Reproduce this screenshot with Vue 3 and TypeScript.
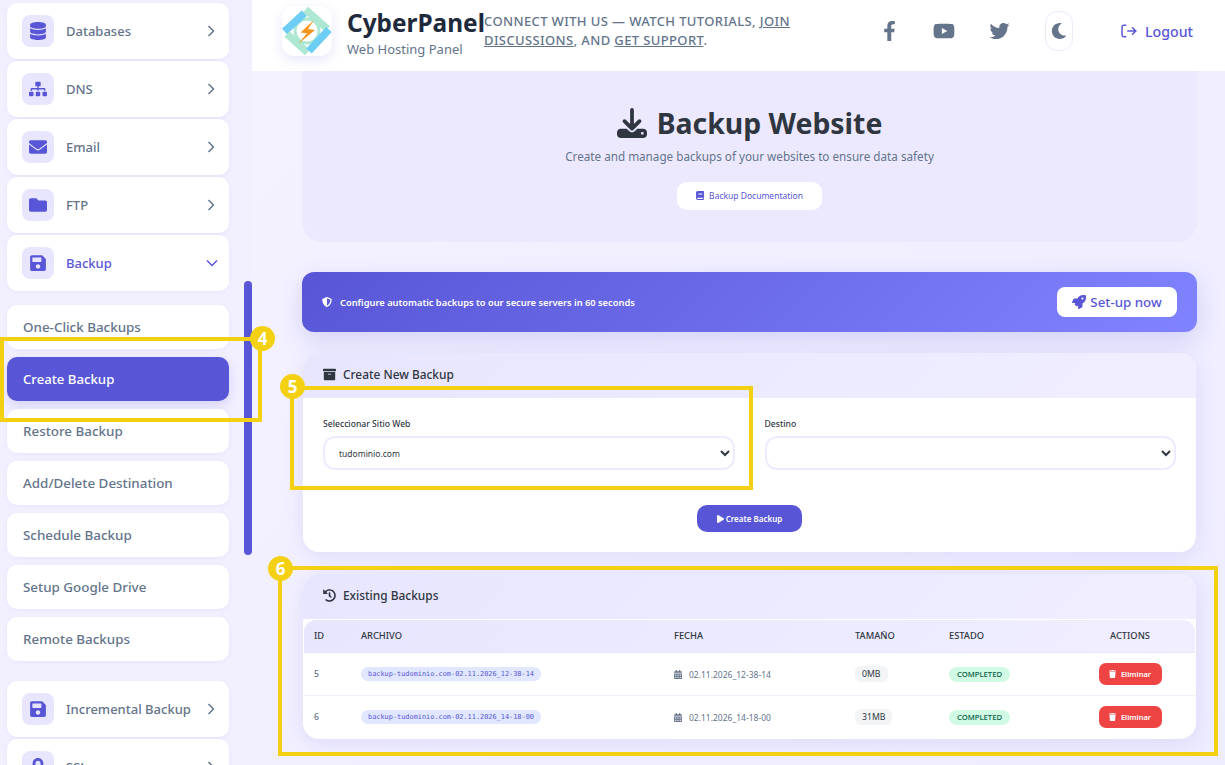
<script setup lang="ts">
interface Icon {
  box: string
  d: string
}

const icons: Record<string, Icon> = {
  database: { box: '0 0 448 512', d: 'M448 73.12v45.75C448 159.2 347.6 192 224 192S0 159.2 0 118.9V73.12C0 32.8 100.4 0 224 0s224 32.8 224 73.12zM448 176v102.9C448 319.2 347.6 352 224 352S0 319.2 0 278.9V176c48.12 33.12 136.2 48.62 224 48.62S399.9 209.1 448 176zM448 336v102.9C448 479.2 347.6 512 224 512S0 479.2 0 438.9V336c48.12 33.13 136.2 48.63 224 48.63S399.9 369.1 448 336z' },
  sitemap: { box: '0 0 640 512', d: 'M128 352H32c-17.67 0-32 14.33-32 32v96c0 17.67 14.33 32 32 32h96c17.67 0 32-14.33 32-32v-96c0-17.67-14.33-32-32-32zm-24-80h192v48h48v-48h192v48h48v-57.59c0-21.17-17.23-38.41-38.41-38.41H344v-64h40c17.67 0 32-14.33 32-32V32c0-17.67-14.33-32-32-32H256c-17.67 0-32 14.33-32 32v96c0 17.67 14.33 32 32 32h40v64H94.41C73.23 224 56 241.23 56 262.41V320h48v-48zm264 80h-96c-17.67 0-32 14.33-32 32v96c0 17.67 14.33 32 32 32h96c17.67 0 32-14.33 32-32v-96c0-17.67-14.33-32-32-32zm240 0h-96c-17.67 0-32 14.33-32 32v96c0 17.67 14.33 32 32 32h96c17.67 0 32-14.33 32-32v-96c0-17.67-14.33-32-32-32z' },
  envelope: { box: '0 0 512 512', d: 'M502.3 190.8c3.9-3.1 9.7-.2 9.7 4.7V400c0 26.5-21.5 48-48 48H48c-26.5 0-48-21.5-48-48V195.6c0-5 5.7-7.8 9.7-4.7 22.4 17.4 52.1 39.5 154.1 113.6 21.1 15.4 56.7 47.8 92.2 47.6 35.7.3 72-32.8 92.3-47.6 102-74.1 131.6-96.3 154-113.7zM256 320c23.2.4 56.6-29.2 73.4-41.4 132.7-96.3 142.8-104.7 173.4-128.7 5.8-4.5 9.2-11.5 9.2-18.9v-19c0-26.5-21.5-48-48-48H48C21.5 64 0 85.5 0 112v19c0 7.4 3.4 14.3 9.2 18.9 30.6 23.9 40.7 32.4 173.4 128.7 16.8 12.2 50.2 41.8 73.4 41.4z' },
  folder: { box: '0 0 512 512', d: 'M464 128H272l-64-64H48C21.49 64 0 85.49 0 112v288c0 26.51 21.49 48 48 48h416c26.51 0 48-21.49 48-48V176c0-26.51-21.49-48-48-48z' },
  save: { box: '0 0 448 512', d: 'M433.941 129.941l-83.882-83.882A48 48 0 0 0 316.118 32H48C21.49 32 0 53.49 0 80v352c0 26.51 21.49 48 48 48h352c26.51 0 48-21.49 48-48V163.882a48 48 0 0 0-14.059-33.941zM224 416c-35.346 0-64-28.654-64-64 0-35.346 28.654-64 64-64s64 28.654 64 64c0 35.346-28.654 64-64 64zm96-304.52V212c0 6.627-5.373 12-12 12H76c-6.627 0-12-5.373-12-12V108c0-6.627 5.373-12 12-12h228.52c3.183 0 6.235 1.264 8.485 3.515l3.48 3.48A11.996 11.996 0 0 1 320 111.48z' },
  lock: { box: '0 0 448 512', d: 'M400 224h-24v-72C376 68.2 307.8 0 224 0S72 68.2 72 152v72H48c-26.5 0-48 21.5-48 48v192c0 26.5 21.5 48 48 48h352c26.5 0 48-21.5 48-48V272c0-26.5-21.5-48-48-48zm-104 0H152v-72c0-39.7 32.3-72 72-72s72 32.3 72 72v72z' },
  facebook: { box: '0 0 320 512', d: 'M279.14 288l14.22-92.66h-88.91v-60.13c0-25.35 12.42-50.06 52.24-50.06h40.42V6.26S260.43 0 225.36 0c-73.22 0-121.08 44.38-121.08 124.72v70.62H22.89V288h81.39v224h100.17V288z' },
  youtube: { box: '0 0 576 512', d: 'M549.655 124.083c-6.281-23.65-24.787-42.276-48.284-48.597C458.781 64 288 64 288 64S117.22 64 74.629 75.486c-23.497 6.322-42.003 24.947-48.284 48.597-11.412 42.867-11.412 132.305-11.412 132.305s0 89.438 11.412 132.305c6.281 23.65 24.787 41.5 48.284 47.821C117.22 448 288 448 288 448s170.78 0 213.371-11.486c23.497-6.321 42.003-24.171 48.284-47.821 11.412-42.867 11.412-132.305 11.412-132.305s0-89.438-11.412-132.305zm-317.51 213.508V175.185l142.739 81.205-142.739 81.201z' },
  twitter: { box: '0 0 512 512', d: 'M459.37 151.716c.325 4.548.325 9.097.325 13.645 0 138.72-105.583 298.558-298.558 298.558-59.452 0-114.68-17.219-161.137-47.106 8.447.974 16.568 1.299 25.34 1.299 49.055 0 94.213-16.568 130.274-44.832-46.132-.975-84.792-31.188-98.112-72.772 6.498.974 12.995 1.624 19.818 1.624 9.421 0 18.843-1.3 27.614-3.573-48.081-9.747-84.143-51.98-84.143-102.985v-1.299c13.969 7.797 30.214 12.67 47.431 13.319-28.264-18.843-46.781-51.005-46.781-87.391 0-19.492 5.197-37.36 14.294-52.954 51.655 63.675 129.3 105.258 216.365 109.807-1.624-7.797-2.599-15.918-2.599-24.04 0-57.828 46.782-104.934 104.934-104.934 30.213 0 57.502 12.67 76.67 33.137 23.715-4.548 46.456-13.32 66.599-25.34-7.798 24.366-24.366 44.833-46.132 57.827 21.117-2.273 41.584-8.122 60.426-16.243-14.292 20.791-32.161 39.308-52.628 54.253z' },
  moon: { box: '0 0 512 512', d: 'M283.211 512c78.962 0 151.079-35.925 198.857-94.792 7.068-8.708-.639-21.43-11.562-19.35-124.203 23.654-238.262-71.576-238.262-196.954 0-72.222 38.662-138.635 101.498-174.394 9.686-5.512 7.25-20.197-3.756-22.23A258.156 258.156 0 0 0 283.211 0c-141.309 0-256 114.511-256 256 0 141.309 114.511 256 256 256z' },
  download: { box: '0 0 512 512', d: 'M288 32c0-17.7-14.3-32-32-32s-32 14.3-32 32V274.7l-73.4-73.4c-12.5-12.5-32.8-12.5-45.3 0s-12.5 32.8 0 45.3l128 128c12.5 12.5 32.8 12.5 45.3 0l128-128c12.5-12.5 12.5-32.8 0-45.3s-32.8-12.5-45.3 0L288 274.7V32zM64 352c-35.3 0-64 28.7-64 64v32c0 35.3 28.7 64 64 64H448c35.3 0 64-28.7 64-64V416c0-35.3-28.7-64-64-64H346.5l-45.3 45.3c-25 25-65.5 25-90.5 0L165.5 352H64zm368 56a24 24 0 1 1 0 48 24 24 0 1 1 0-48z' },
  book: { box: '0 0 448 512', d: 'M448 360V24c0-13.3-10.7-24-24-24H96C43 0 0 43 0 96v320c0 53 43 96 96 96h328c13.3 0 24-10.7 24-24v-16c0-7.5-3.5-14.3-8.9-18.7-4.2-15.4-4.2-59.3 0-74.7 5.4-4.3 8.9-11.1 8.9-18.6zM128 134c0-3.3 2.7-6 6-6h212c3.3 0 6 2.7 6 6v20c0 3.3-2.7 6-6 6H134c-3.3 0-6-2.7-6-6v-20zm0 64c0-3.3 2.7-6 6-6h212c3.3 0 6 2.7 6 6v20c0 3.3-2.7 6-6 6H134c-3.3 0-6-2.7-6-6v-20zm253.4 250H96c-17.7 0-32-14.3-32-32 0-17.6 14.4-32 32-32h285.4c-1.9 17.1-1.9 46.9 0 64z' },
  shield: { box: '0 0 512 512', d: 'M466.5 83.7l-192-80a48.15 48.15 0 0 0-36.9 0l-192 80C27.7 91.1 16 108.6 16 128c0 198.5 114.5 335.7 221.5 380.3 11.8 4.9 25.1 4.9 36.9 0C360.1 472.6 496 349.3 496 128c0-19.4-11.7-36.9-29.5-44.3zM256.1 446.3l-.1-381 175.9 73.3c-3.3 151.4-82.1 261.1-175.8 307.7z' },
  rocket: { box: '0 0 512 512', d: 'M505.12 19.09c-1.19-5.53-6.66-11-12.21-12.19C460.72 0 435.51 0 410.41 0 307.18 0 245.27 55.2 199.05 128H94.84c-16.35.02-35.56 11.88-42.89 26.48L2.52 253.3A28.4 28.4 0 0 0 0 264a24 24 0 0 0 24 24h103.81l-22.47 22.47c-11.37 11.36-13 32.26 0 45.25l50.9 50.91c11.16 11.19 32.16 13.16 45.28 0L224 384.16V488a24 24 0 0 0 24 24 28.56 28.56 0 0 0 10.71-2.52l98.73-49.39c14.63-7.3 26.51-26.5 26.51-42.86V312.8c72.6-46.31 128.03-108.41 128.03-211.1.1-25.2.1-50.4-6.86-82.61zM384.04 168a40 40 0 1 1 40.01-40 40.02 40.02 0 0 1-40.01 40z' },
  archive: { box: '0 0 512 512', d: 'M32 448c0 17.7 14.3 32 32 32h384c17.7 0 32-14.3 32-32V160H32v288zm160-212c0-6.6 5.4-12 12-12h104c6.6 0 12 5.4 12 12v8c0 6.6-5.4 12-12 12H204c-6.6 0-12-5.4-12-12v-8zM480 32H32C14.3 32 0 46.3 0 64v48c0 8.8 7.2 16 16 16h480c8.8 0 16-7.2 16-16V64c0-17.7-14.3-32-32-32z' },
  history: { box: '0 0 512 512', d: 'M504 255.531c.253 136.64-111.18 248.372-247.82 248.468-59.015.042-113.223-20.53-155.822-54.911-11.077-8.94-11.905-25.541-1.839-35.607l11.267-11.267c8.609-8.609 22.353-9.551 31.891-1.984C173.062 425.135 212.781 440 256 440c101.705 0 184-82.311 184-184 0-101.705-82.311-184-184-184-48.814 0-93.149 18.969-126.068 49.932l50.754 50.754c10.08 10.08 2.941 27.314-11.313 27.314H24c-8.837 0-16-7.163-16-16V38.627c0-14.254 17.234-21.393 27.314-11.314l49.372 49.372C129.209 34.136 189.552 8 256 8c136.81 0 247.747 110.78 248 247.531zm-180.912 78.784l9.823-12.63c8.138-10.463 6.253-25.542-4.21-33.679L288 256.349V152c0-13.255-10.745-24-24-24h-16c-13.255 0-24 10.745-24 24v135.651l65.409 50.874c10.463 8.137 25.541 6.253 33.679-4.21z' },
  calendar: { box: '0 0 448 512', d: 'M0 464c0 26.5 21.5 48 48 48h352c26.5 0 48-21.5 48-48V192H0v272zm320-196c0-6.6 5.4-12 12-12h40c6.6 0 12 5.4 12 12v40c0 6.6-5.4 12-12 12h-40c-6.6 0-12-5.4-12-12v-40zm0 128c0-6.6 5.4-12 12-12h40c6.6 0 12 5.4 12 12v40c0 6.6-5.4 12-12 12h-40c-6.6 0-12-5.4-12-12v-40zM192 268c0-6.6 5.4-12 12-12h40c6.6 0 12 5.4 12 12v40c0 6.6-5.4 12-12 12h-40c-6.6 0-12-5.4-12-12v-40zm0 128c0-6.6 5.4-12 12-12h40c6.6 0 12 5.4 12 12v40c0 6.6-5.4 12-12 12h-40c-6.6 0-12-5.4-12-12v-40zM64 268c0-6.6 5.4-12 12-12h40c6.6 0 12 5.4 12 12v40c0 6.6-5.4 12-12 12H76c-6.6 0-12-5.4-12-12v-40zm0 128c0-6.6 5.4-12 12-12h40c6.6 0 12 5.4 12 12v40c0 6.6-5.4 12-12 12H76c-6.6 0-12-5.4-12-12v-40zM400 64h-48V16c0-8.8-7.2-16-16-16h-32c-8.8 0-16 7.2-16 16v48H160V16c0-8.8-7.2-16-16-16h-32c-8.8 0-16 7.2-16 16v48H48C21.5 64 0 85.5 0 112v48h448v-48c0-26.5-21.5-48-48-48z' },
  trash: { box: '0 0 448 512', d: 'M432 32H312l-9.4-18.7A24 24 0 0 0 281.1 0H166.8a23.72 23.72 0 0 0-21.4 13.3L136 32H16A16 16 0 0 0 0 48v32a16 16 0 0 0 16 16h416a16 16 0 0 0 16-16V48a16 16 0 0 0-16-16zM53.2 467a48 48 0 0 0 47.9 45h245.8a48 48 0 0 0 47.9-45L416 128H32z' },
  play: { box: '0 0 448 512', d: 'M424.4 214.7L72.4 6.6C43.8-10.3 0 6.1 0 47.9V464c0 37.5 40.7 60.1 72.4 41.3l352-208c31.4-18.5 31.5-64.1 0-82.6z' },
}

const topNav = [
  { label: 'Databases', icon: 'database', open: false },
  { label: 'DNS', icon: 'sitemap', open: false },
  { label: 'Email', icon: 'envelope', open: false },
  { label: 'FTP', icon: 'folder', open: false },
  { label: 'Backup', icon: 'save', open: true },
]

const subNav = [
  { label: 'One-Click Backups', active: false },
  { label: 'Create Backup', active: true },
  { label: 'Restore Backup', active: false },
  { label: 'Add/Delete Destination', active: false },
  { label: 'Schedule Backup', active: false },
  { label: 'Setup Google Drive', active: false },
  { label: 'Remote Backups', active: false },
]

const bottomNav = [
  { label: 'Incremental Backup', icon: 'save', open: false },
  { label: 'SSL', icon: 'lock', open: false },
]

const socials = ['facebook', 'youtube', 'twitter']

const backups = [
  { id: 5, file: 'backup-tudominio.com-02.11.2026_12-38-14', date: '02.11.2026_12-38-14', size: '0MB' },
  { id: 6, file: 'backup-tudominio.com-02.11.2026_14-18-00', date: '02.11.2026_14-18-00', size: '31MB' },
]
</script>

<template>
  <div class="page">
    <aside class="sidebar">
      <a v-for="item in topNav" :key="item.label" class="nav-item" :class="{ open: item.open }">
        <span class="nav-icon">
          <svg :viewBox="icons[item.icon].box"><path :d="icons[item.icon].d" /></svg>
        </span>
        <span class="nav-label">{{ item.label }}</span>
        <svg v-if="item.open" class="chev down" viewBox="0 0 12 8"><path d="M1 1.5l5 5 5-5" /></svg>
        <svg v-else class="chev" viewBox="0 0 8 12"><path d="M1.5 1l5 5-5 5" /></svg>
      </a>
      <div class="subnav">
        <a v-for="sub in subNav" :key="sub.label" class="sub-item" :class="{ active: sub.active }">{{ sub.label }}</a>
      </div>
      <a v-for="item in bottomNav" :key="item.label" class="nav-item">
        <span class="nav-icon">
          <svg :viewBox="icons[item.icon].box"><path :d="icons[item.icon].d" /></svg>
        </span>
        <span class="nav-label">{{ item.label }}</span>
        <svg class="chev" viewBox="0 0 8 12"><path d="M1.5 1l5 5-5 5" /></svg>
      </a>
      <div class="scroll-thumb"></div>
    </aside>

    <div class="main">
      <header class="topbar">
        <div class="logo">
          <svg viewBox="0 0 50 50">
            <circle cx="25" cy="25" r="12" class="ring" />
            <path d="M2.5 25.5L22.5 7" class="bar-blue" />
            <path d="M23.5 3.5L45.5 23" class="bar-mint" />
            <path d="M5 28L25.5 46.5" class="bar-mint" />
            <path d="M27 45L47 23.5" class="bar-blue" />
            <path d="M32 14L18.5 26.5l6.5.8L16 38l17-14-7-1z" fill="#f7941d" />
          </svg>
        </div>
        <div class="brand">
          <div class="brand-name">CyberPanel</div>
          <div class="brand-sub">Web Hosting Panel</div>
        </div>
        <p class="connect">
          CONNECT WITH US — WATCH TUTORIALS, <u>JOIN DISCUSSIONS</u>, AND <u>GET SUPPORT</u>.
        </p>
        <div class="socials">
          <svg v-for="name in socials" :key="name" class="social" :class="name" :viewBox="icons[name].box">
            <path :d="icons[name].d" />
          </svg>
        </div>
        <button class="theme-btn">
          <svg :viewBox="icons.moon.box"><path :d="icons.moon.d" /></svg>
        </button>
        <a class="logout">
          <svg viewBox="0 0 18 16"><path d="M6 1.5H3a2 2 0 0 0-2 2v9a2 2 0 0 0 2 2h3M7 8h9.5M12.5 3.8L16.8 8l-4.3 4.2" /></svg>
          Logout
        </a>
      </header>

      <main class="content">
        <section class="hero">
          <h1>
            <svg :viewBox="icons.download.box"><path :d="icons.download.d" /></svg>
            Backup Website
          </h1>
          <p>Create and manage backups of your websites to ensure data safety</p>
          <a class="doc-btn">
            <svg :viewBox="icons.book.box"><path :d="icons.book.d" /></svg>
            Backup Documentation
          </a>
        </section>

        <section class="banner">
          <div class="banner-text">
            <svg :viewBox="icons.shield.box"><path :d="icons.shield.d" /></svg>
            Configure automatic backups to our secure servers in 60 seconds
          </div>
          <a class="setup-btn">
            <svg :viewBox="icons.rocket.box"><path :d="icons.rocket.d" /></svg>
            Set-up now
          </a>
        </section>

        <section class="card create-card">
          <div class="card-head">
            <svg :viewBox="icons.archive.box"><path :d="icons.archive.d" /></svg>
            Create New Backup
          </div>
          <div class="form-body">
            <div class="form-row">
              <label class="field">
                Seleccionar Sitio Web
                <select>
                  <option>tudominio.com</option>
                </select>
              </label>
              <label class="field">
                Destino
                <select>
                  <option></option>
                </select>
              </label>
            </div>
            <button class="create-btn">
              <svg :viewBox="icons.play.box"><path :d="icons.play.d" /></svg>
              Create Backup
            </button>
          </div>
        </section>

        <section class="card">
          <div class="card-head">
            <svg :viewBox="icons.history.box"><path :d="icons.history.d" /></svg>
            Existing Backups
          </div>
          <div class="table">
            <div class="row head-row">
              <span>ID</span>
              <span>ARCHIVO</span>
              <span>FECHA</span>
              <span>TAMAÑO</span>
              <span>ESTADO</span>
              <span class="center">ACTIONS</span>
            </div>
            <div v-for="b in backups" :key="b.id" class="row">
              <span class="cell-id">{{ b.id }}</span>
              <span><code class="file-pill">{{ b.file }}</code></span>
              <span class="date">
                <svg :viewBox="icons.calendar.box"><path :d="icons.calendar.d" /></svg>
                {{ b.date }}
              </span>
              <span class="pill-cell"><span class="size-pill">{{ b.size }}</span></span>
              <span class="pill-cell"><span class="status-pill">COMPLETED</span></span>
              <span class="center pill-cell">
                <button class="del-btn">
                  <svg :viewBox="icons.trash.box"><path :d="icons.trash.d" /></svg>
                  Eliminar
                </button>
              </span>
            </div>
          </div>
        </section>
      </main>
    </div>

    <!-- step callouts drawn over the screenshot -->
    <div class="callout c4"><span class="step">4</span></div>
    <div class="callout c5"><span class="step">5</span></div>
    <div class="callout c6"><span class="step">6</span></div>
  </div>
</template>

<style>
html,
body {
  margin: 0;
  background: #f3f1ff;
}
</style>

<style scoped>
.page {
  position: relative;
  display: flex;
  width: 1225px;
  height: 765px;
  overflow: hidden;
  background: #f2f0ff;
  font-family: "Noto Sans", "Open Sans", sans-serif;
  color: #2f3640;
}

svg {
  fill: currentColor;
  flex-shrink: 0;
}

/* sidebar */
.sidebar {
  position: relative;
  width: 252px;
  flex-shrink: 0;
  padding: 3px 23px 0 7px;
  box-sizing: border-box;
  display: flex;
  flex-direction: column;
  gap: 2px;
  overflow: hidden;
}

.nav-item {
  display: flex;
  align-items: center;
  flex-shrink: 0;
  height: 56px;
  padding: 0 15px;
  box-sizing: border-box;
  background: #fff;
  border-radius: 10px;
  box-shadow: 0 1px 4px rgba(88, 86, 214, 0.08);
  color: #64748b;
}

.nav-icon {
  display: flex;
  align-items: center;
  justify-content: center;
  width: 32px;
  height: 32px;
  border-radius: 8px;
  background: #e8e6ff;
  color: #5856d6;
  margin-right: 12px;
}

.nav-icon svg {
  width: 18px;
  height: 18px;
}

.nav-label {
  flex: 1;
  font-size: 13px;
  font-weight: 500;
  white-space: nowrap;
}

.nav-item.open {
  color: #5856d6;
}

.chev {
  width: 8px;
  height: 12px;
  margin-right: -1px;
  fill: none;
  stroke: currentColor;
  stroke-width: 1.5;
}

.chev.down {
  width: 12px;
  height: 8px;
  margin-right: -4px;
}

.subnav {
  display: flex;
  flex-direction: column;
  gap: 8px;
  margin: 12px 0 18px;
}

.sub-item {
  display: flex;
  align-items: center;
  flex-shrink: 0;
  height: 44px;
  padding: 0 16px;
  box-sizing: border-box;
  background: #fff;
  border-radius: 10px;
  box-shadow: 0 1px 4px rgba(88, 86, 214, 0.08);
  color: #64748b;
  font-size: 13.4px;
  font-weight: 500;
}

.sub-item.active {
  background: #5856d6;
  color: #fff;
  font-size: 13.2px;
  box-shadow: 0 4px 12px rgba(88, 86, 214, 0.2);
}

.scroll-thumb {
  position: absolute;
  top: 281px;
  right: 0;
  width: 8px;
  height: 274px;
  border-radius: 4px;
  background: #5856d6;
}

/* top bar */
.main {
  flex: 1;
  min-width: 0;
  display: flex;
  flex-direction: column;
}

.topbar {
  display: flex;
  align-items: flex-start;
  flex-shrink: 0;
  height: 71px;
  padding: 6px 32px 0 30px;
  box-sizing: border-box;
  background: #fff;
  position: relative;
  z-index: 1;
}

.logo {
  width: 50px;
  height: 50px;
  flex-shrink: 0;
  border-radius: 12px;
  background: #fff;
  box-shadow: 0 4px 12px rgba(88, 86, 214, 0.15);
}

.logo svg {
  display: block;
  width: 50px;
  height: 50px;
}

.bar-blue,
.bar-mint,
.ring {
  fill: none;
  stroke-width: 7.5;
}

.bar-blue {
  stroke: #6ecdf5;
}

.bar-mint {
  stroke: #aee8d2;
}

.ring {
  stroke: #aee8d2;
  stroke-width: 3;
}

.brand {
  margin-left: 15px;
  flex-shrink: 0;
  width: 137px;
  white-space: nowrap;
}

.brand-name {
  font-size: 24.4px;
  font-weight: 700;
  line-height: 33px;
  color: #1e293b;
}

.brand-sub {
  font-size: 13px;
  line-height: 18px;
  margin-top: 1px;
  color: #64748b;
}

.connect {
  width: 316px;
  margin: 6px 0 0;
  font-size: 13px;
  line-height: 19px;
  font-weight: 500;
  letter-spacing: 0.38px;
  color: #64748b;
}

.socials {
  display: flex;
  align-items: center;
  height: 40px;
  margin: 5px 0 0 auto;
  color: #64748b;
}

.social {
  height: 20px;
}

.social.facebook {
  width: 13px;
  margin-right: 37px;
}

.social.youtube {
  width: 22px;
  margin-right: 34px;
}

.social.twitter {
  width: 21px;
}

.theme-btn {
  display: flex;
  align-items: center;
  justify-content: center;
  width: 28px;
  height: 40px;
  margin: 5px 0 0 35px;
  padding: 0;
  background: #fff;
  border: 1px solid #ece9ff;
  border-radius: 12px;
  color: #64748b;
}

.theme-btn svg {
  width: 16px;
  height: 16px;
}

.logout {
  display: flex;
  align-items: center;
  gap: 8px;
  height: 40px;
  margin: 5px 0 0 48px;
  font-size: 14.2px;
  font-weight: 500;
  color: #5856d6;
}

.logout svg {
  width: 16px;
  height: 14px;
  fill: none;
  stroke: currentColor;
  stroke-width: 1.7;
}

/* content */
.content {
  flex: 1;
  min-height: 0;
  padding: 0 28px 0 50px;
  background: linear-gradient(135deg, #f4f2ff, #eeecff);
}

.hero {
  height: 191px;
  margin-top: -20px;
  padding-top: 50px;
  box-sizing: border-box;
  margin-bottom: 30px;
  border-radius: 20px;
  background: #ece9ff;
  text-align: center;
}

.hero h1 {
  display: flex;
  align-items: center;
  justify-content: center;
  gap: 10px;
  margin: 0;
  height: 44px;
  font-size: 28.4px;
  font-weight: 700;
  color: #2f3640;
}

.hero h1 svg {
  width: 30px;
  height: 30px;
}

.hero p {
  margin: 2px 0 0;
  font-size: 11.7px;
  line-height: 19px;
  color: #64748b;
}

.doc-btn {
  display: inline-flex;
  align-items: center;
  justify-content: center;
  gap: 5px;
  width: 145px;
  height: 28px;
  margin-top: 16px;
  padding-bottom: 1px;
  box-sizing: border-box;
  border-radius: 10px;
  background: #fff;
  font-size: 8.5px;
  color: #5856d6;
}

.doc-btn svg {
  width: 8px;
  height: 9px;
}

.banner {
  display: flex;
  align-items: center;
  justify-content: space-between;
  height: 60px;
  margin-bottom: 21px;
  padding: 0 20px;
  box-sizing: border-box;
  border-radius: 12px;
  background: linear-gradient(135deg, #5856d6, #8083ff);
  box-shadow: 0 8px 24px rgba(88, 86, 214, 0.2);
}

.banner-text {
  display: flex;
  align-items: center;
  gap: 8px;
  font-size: 9.3px;
  font-weight: 600;
  color: #fff;
}

.banner-text svg {
  width: 10px;
  height: 10px;
}

.setup-btn {
  display: flex;
  align-items: center;
  justify-content: center;
  gap: 4px;
  width: 120px;
  height: 30px;
  border-radius: 8px;
  background: #fff;
  font-size: 13.3px;
  font-weight: 500;
  color: #5856d6;
}

.setup-btn svg {
  width: 14px;
  height: 14px;
}

.card {
  margin: 0 1px 22px;
  border-radius: 16px;
  background: #fff;
  overflow: hidden;
  box-shadow: 0 4px 20px rgba(88, 86, 214, 0.12);
}

.card-head {
  display: flex;
  align-items: center;
  gap: 7px;
  height: 45px;
  padding: 0 20px 3px;
  box-sizing: border-box;
  background: linear-gradient(135deg, #e8e6ff, #f0eeff);
  font-size: 11.9px;
  font-weight: 500;
  color: #2f3640;
}

.card-head svg {
  width: 13px;
  height: 13px;
}

.form-body {
  height: 154px;
  padding: 20px 20px 0;
  box-sizing: border-box;
  text-align: center;
}

.form-row {
  display: flex;
  gap: 30px;
  text-align: left;
}

.field {
  flex: 1;
  min-width: 0;
  display: block;
  font-size: 8.6px;
  line-height: 12px;
  font-weight: 500;
  color: #2f3640;
}

.field select {
  display: block;
  width: 100%;
  height: 34px;
  margin-top: 6px;
  padding: 0 10px;
  box-sizing: border-box;
  border: 2px solid #eeebff;
  border-radius: 12px;
  background: #fff;
  font-family: inherit;
  font-size: 8.5px;
  color: #2f3640;
}

.create-btn {
  display: inline-flex;
  align-items: center;
  justify-content: center;
  gap: 2px;
  width: 105px;
  height: 27px;
  margin-top: 35px;
  padding: 0;
  border: 0;
  border-radius: 10px;
  background: #5856d6;
  font-family: inherit;
  font-size: 8px;
  font-weight: 600;
  color: #fff;
}

.create-btn svg {
  width: 7px;
  height: 8px;
}

/* table */
.table {
  margin: 1px 1px 0;
}

.row {
  display: grid;
  grid-template-columns: 47px 313px 181px 94px 116px 1fr;
  align-items: center;
  box-sizing: border-box;
  height: 43px;
  padding-left: 10px;
  border-bottom: 1px solid #f0eeff;
  font-size: 8.7px;
  color: #2f3640;
}

.row:last-child {
  border-bottom: 0;
  padding-bottom: 1px;
}

.head-row {
  height: 33px;
  padding-bottom: 1px;
  border-radius: 12px 12px 0 0;
  border-bottom: 1px solid #e8e6ff;
  background: linear-gradient(135deg, #e8e6ff, #f0eeff);
  font-size: 9.3px;
  font-weight: 500;
}

.center {
  text-align: center;
}

.pill-cell {
  display: block;
  line-height: 0;
}

.cell-id {
  color: #64748b;
  font-weight: 500;
}

.file-pill {
  display: inline-block;
  width: 180px;
  height: 14px;
  border-radius: 7px;
  background: #e0e7ff;
  font-family: "DejaVu Sans Mono", monospace;
  font-size: 6.9px;
  line-height: 14px;
  text-align: center;
  color: #5856d6;
}

.date {
  display: flex;
  align-items: center;
  gap: 7px;
  font-size: 8.5px;
  color: #64748b;
}

.date svg {
  width: 8px;
  height: 9px;
}

.size-pill {
  display: inline-block;
  padding: 0 7px;
  height: 16px;
  line-height: 16px;
  border-radius: 6px;
  background: #f3f4f6;
  color: #2f3640;
}

.status-pill {
  display: inline-block;
  width: 61px;
  height: 15px;
  line-height: 15px;
  border-radius: 8px;
  background: #d1fae5;
  font-size: 7.7px;
  font-weight: 500;
  text-align: center;
  color: #065f46;
}

.del-btn {
  display: inline-flex;
  align-items: center;
  justify-content: center;
  gap: 5px;
  width: 63px;
  height: 22px;
  padding: 0;
  border: 0;
  border-radius: 7px;
  background: #ef4444;
  font-family: inherit;
  font-size: 7.5px;
  font-weight: 600;
  color: #fff;
}

.del-btn svg {
  width: 7px;
  height: 8px;
}

/* step callouts */
.callout {
  position: absolute;
  box-sizing: border-box;
  border: 4px solid #f4d013;
  z-index: 5;
}

.step {
  position: absolute;
  display: flex;
  align-items: center;
  justify-content: center;
  width: 25px;
  height: 25px;
  border-radius: 50%;
  background: #f4d013;
  color: #fff;
  font-size: 17px;
  font-weight: 700;
}

.c4 {
  left: 0;
  top: 337px;
  width: 262px;
  height: 85px;
}

.c4 .step {
  right: -17px;
  top: -15px;
}

.c5 {
  left: 290px;
  top: 386px;
  width: 463px;
  height: 104px;
}

.c5 .step {
  left: -14px;
  top: -16px;
}

.c6 {
  left: 278px;
  top: 566px;
  width: 940px;
  height: 190px;
}

.c6 .step {
  left: -14px;
  top: -14px;
}
</style>
